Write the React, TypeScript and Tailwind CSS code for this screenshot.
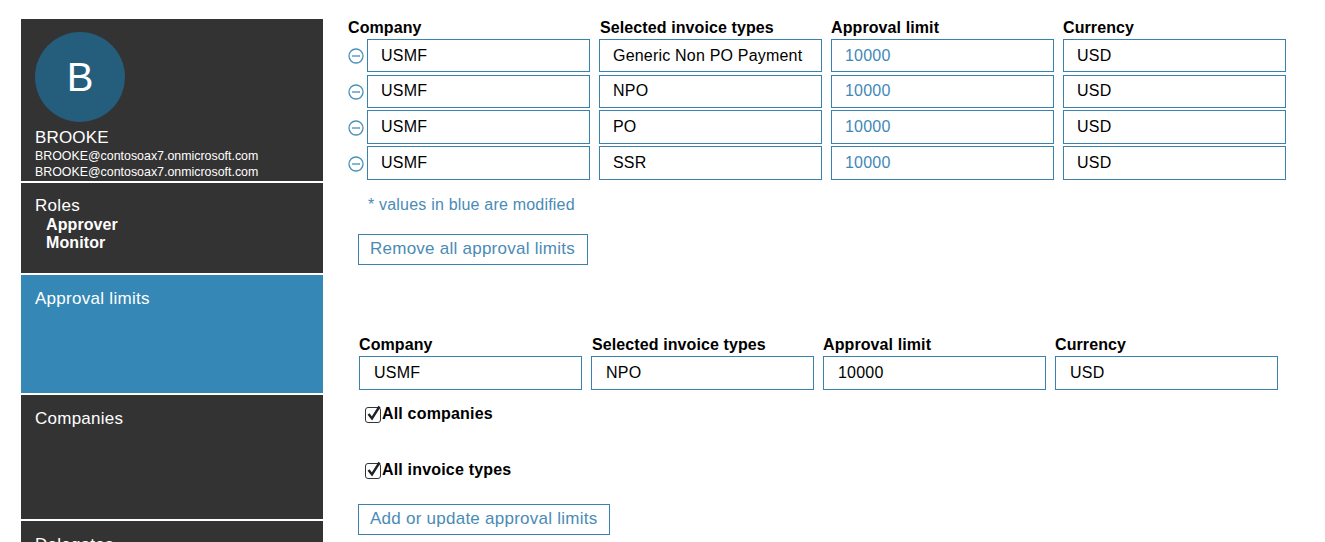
import React from "react";

const rows = [
  { type: "Generic Non PO Payment", h: "h-[33px]", mt: "mt-0", lift: false },
  { type: "NPO", h: "h-[33px]", mt: "mt-[3px]", lift: true },
  { type: "PO", h: "h-[34px]", mt: "mt-[2px]", lift: false },
  { type: "SSR", h: "h-[34px]", mt: "mt-[2px]", lift: false },
];

function Field({ value, blue, lift, wide }: { value: string; blue?: boolean; lift?: boolean; wide?: boolean }) {
  return (
    <input
      readOnly
      value={value}
      className={`h-full w-[223px] border border-[#3a82ad] bg-white text-base tracking-[0.2px] outline-none ${
        wide ? "pl-[14px]" : "pl-[13px]"
      } ${lift ? "pb-[2px]" : "pb-0"} ${blue ? "text-[#3f88b8]" : "text-black"}`}
    />
  );
}

function MinusIcon() {
  return (
    <svg width="16" height="16" viewBox="0 0 16 16" fill="none" className="mt-[1px] shrink-0">
      <circle cx="8" cy="8" r="7" stroke="#4a90bb" strokeWidth="1.3" />
      <path d="M4 8h8" stroke="#4a90bb" strokeWidth="1.3" />
    </svg>
  );
}

function CheckRow({ label, className }: { label: string; className: string }) {
  return (
    <label className={`flex items-start pl-[6px] text-base font-bold tracking-[0.18px] text-black ${className}`}>
      <svg width="17" height="18" viewBox="0 0 17 18" fill="none" className="mt-[3px] shrink-0">
        <rect x="0.5" y="2.5" width="15" height="15" rx="2.5" fill="white" stroke="#333" />
        <path d="M3.5 9l3.5 4.5L14.5 1.5" stroke="#222" strokeWidth="2.4" />
      </svg>
      {label}
    </label>
  );
}

function OutlineButton({ label, className }: { label: string; className: string }) {
  return (
    <button
      className={`block h-[31px] border border-[#3a82ad] bg-white pb-[2px] pl-[11px] text-left text-[17px] tracking-[0.25px] text-[#4a8bb6] ${className}`}
    >
      {label}
    </button>
  );
}

export default function App() {
  return (
    <div className="flex h-screen overflow-hidden bg-white font-['Liberation_Sans',Arial,sans-serif] text-base">
      {/* Left */}
      <aside className="ml-[21px] mt-[19px] flex w-[302px] shrink-0 flex-col gap-[2px] text-white">
        <div className="h-[162px] shrink-0 bg-[#333333] pl-[14px] pt-[13px]">
          <div className="flex h-[90px] w-[90px] items-center justify-center rounded-full bg-[#255d7d] text-[40px] leading-none">
            B
          </div>
          <p className="mt-[6px] text-[17px] leading-[20px] tracking-[0.15px]">BROOKE</p>
          <p className="text-[12.4px] leading-[16px]">BROOKE@contosoax7.onmicrosoft.com</p>
          <p className="text-[12.4px] leading-[16px]">BROOKE@contosoax7.onmicrosoft.com</p>
        </div>

        <div className="h-[90px] shrink-0 bg-[#333333] pl-[14px] pt-[13px]">
          <p className="text-[17px] leading-[20px] tracking-[0.3px]">Roles</p>
          <p className="ml-[11px] font-bold leading-[18px] tracking-[0.1px]">Approver</p>
          <p className="ml-[11px] font-bold leading-[18px] tracking-[0.1px]">Monitor</p>
        </div>

        <div className="h-[118px] shrink-0 bg-[#3587b5] pl-[14px] pt-[14px]">
          <p className="text-[17px] leading-[20px] tracking-[0.28px]">Approval limits</p>
        </div>

        <div className="h-[124px] shrink-0 bg-[#333333] pl-[14px] pt-[14px]">
          <p className="text-[17px] leading-[20px] tracking-[0.25px]">Companies</p>
        </div>

        <div className="h-[60px] shrink-0 bg-[#333333] pl-[14px] pt-[14px]">
          <p className="text-[17px] leading-[20px] tracking-[0.25px]">Delegates</p>
        </div>
      </aside>

      {/* Right */}
      <main className="min-w-0 flex-1">
        {/* Current limits */}
        <div className="ml-[25px] mt-[17px] flex h-[21px] items-center font-bold tracking-[0.1px] text-black">
          <span className="w-[252px]">Company</span>
          <span className="w-[231px]">Selected invoice types</span>
          <span className="w-[232px]">Approval limit</span>
          <span>Currency</span>
        </div>

        <div className="mt-[1px]">
          {rows.map((r) => (
            <div key={r.type} className={`ml-[25px] flex items-center ${r.h} ${r.mt}`}>
              <MinusIcon />
              <div className="ml-[3px] flex h-full gap-[9px]">
                <Field value="USMF" lift={r.lift} />
                <Field value={r.type} lift={r.lift} />
                <Field value="10000" blue lift={r.lift} />
                <Field value="USD" lift={r.lift} />
              </div>
            </div>
          ))}
        </div>

        <p className="ml-[45px] mt-[16px] leading-[18px] tracking-[0.2px] text-[#4a8bb6]">* values in blue are modified</p>
        <OutlineButton label="Remove all approval limits" className="ml-[35px] mt-[20px] w-[230px]" />

        {/* New limit */}
        <div className="ml-[36px] mt-[70px] flex h-[20px] items-center font-bold tracking-[0.1px] text-black">
          <span className="w-[233px]">Company</span>
          <span className="w-[231px]">Selected invoice types</span>
          <span className="w-[232px]">Approval limit</span>
          <span>Currency</span>
        </div>
        <div className="ml-[36px] mt-[1px] flex h-[34px] gap-[9px]">
          <Field value="USMF" wide />
          <Field value="NPO" wide />
          <Field value="10000" wide />
          <Field value="USD" wide />
        </div>

        <CheckRow label="All companies" className="ml-[36px] mt-[12px] h-[20px]" />
        <CheckRow label="All invoice types" className="ml-[36px] mt-[36px] h-[20px]" />
        <OutlineButton label="Add or update approval limits" className="ml-[35px] mt-[26px] w-[252px]" />
      </main>
    </div>
  );
}
